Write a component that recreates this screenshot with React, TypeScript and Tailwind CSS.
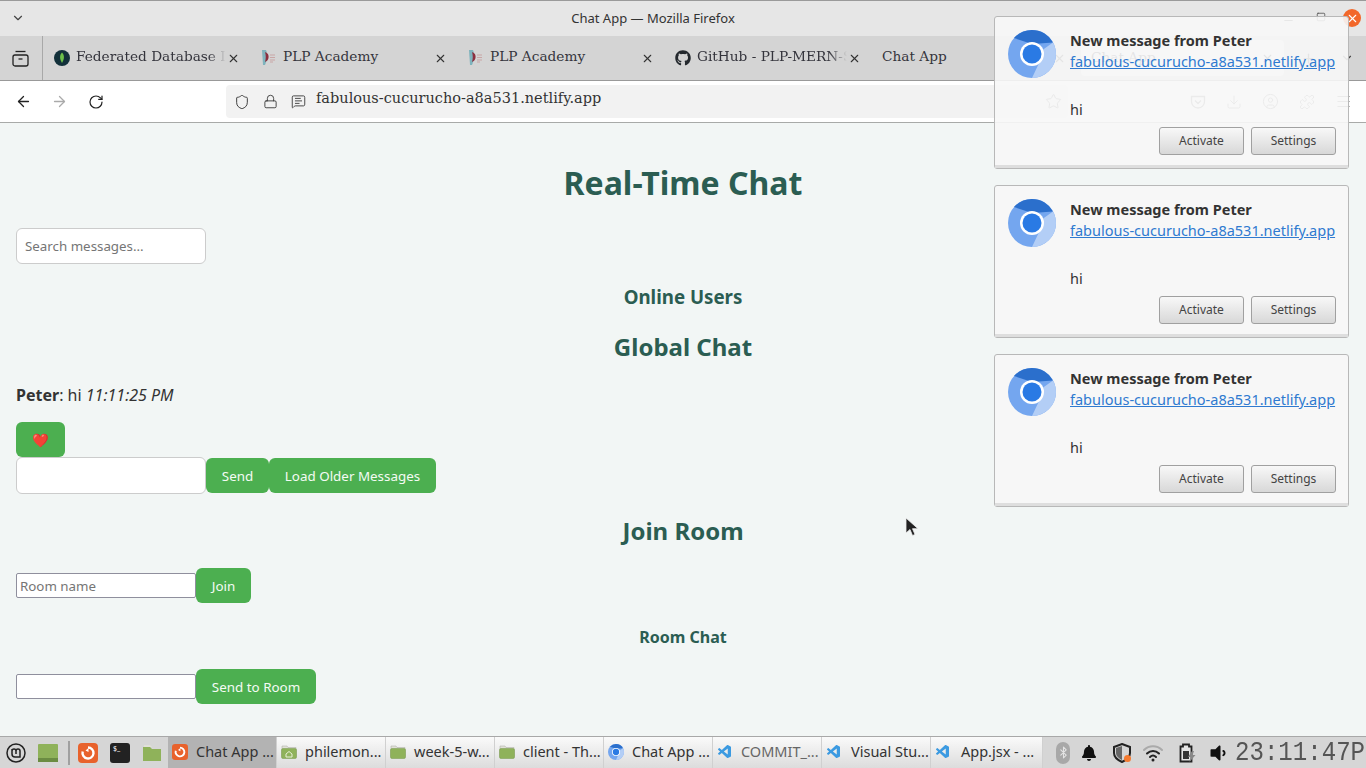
import { ArrowLeft, ArrowRight, Bluetooth, ChevronDown, CircleUser, Download, Lock, Menu, MessageSquareText, Minus, Plus, Puzzle, RotateCw, Shield, Square, Star, X } from 'lucide-react';
import { FaBell, FaGithub, FaVolumeDown } from 'react-icons/fa';
import { VscVscode } from 'react-icons/vsc';

const serif = { fontFamily: '"DejaVu Serif", serif' };

function MongoIcon() {
  return (
    <svg width="16" height="16" viewBox="0 0 16 16">
      <circle cx="8" cy="8" r="8" fill="#12303a" />
      <path d="M8 2.500c2.400 2.400 2.800 6 0 10.500-2.800-4.500-2.400-8.100 0-10.500z" fill="#6cc04a" />
    </svg>
  );
}

function PlpIcon() {
  return (
    <svg width="16" height="18" viewBox="0 0 16 18">
      <path d="M1 1h4c1.500 3 1.500 9-1 15H2z" fill="#7fb3bd" />
      <path d="M4 3c3 1 4 3 3.500 6-.4 2-1.500 3-3.500 4 1-3 1-7 0-10z" fill="#8c2f3f" />
      <path d="M9 6h5M9 8.500h5M9 11h5M9 13h3" stroke="#c9a6a6" strokeWidth="1" />
    </svg>
  );
}

function ChromiumIcon({ size }: { size: number }) {
  return (
    <svg width={size} height={size} viewBox="0 0 48 48">
      <circle cx="24" cy="24" r="24" fill="#74a6ef" />
      <path d="M24 0a24 24 0 0 1 21 12.400L24 14 6 8A24 24 0 0 1 24 0z" fill="#2b6fcc" />
      <path d="M45 12.400A24 24 0 0 1 24 48l8-17 1-10z" fill="#b3cef6" />
      <circle cx="24" cy="24" r="12" fill="#fff" />
      <circle cx="24" cy="24" r="9.500" fill="#2a7ae4" />
    </svg>
  );
}

function FirefoxIcon({ size }: { size: number }) {
  return (
    <svg width={size} height={size} viewBox="0 0 20 20">
      <rect width="20" height="20" rx="4" fill="#e8622c" />
      <path d="M10 4.500a5.500 5.500 0 1 1-5.300 4" fill="none" stroke="#fff" strokeWidth="2.400" />
      <path d="M7.500 7.500l3-2.500v4z" fill="#fff" />
    </svg>
  );
}

function FolderIcon({ home }: { home?: boolean }) {
  return (
    <svg width="16" height="14" viewBox="0 0 16 14">
      <path d="M1 1h5l1 1.500h8v9H1z" fill="#e0e0d8" stroke="#a8a8a0" strokeWidth=".5" />
      <rect x=".5" y="3.500" width="15" height="10" rx="1.500" fill="#8fb25a" stroke="#76984a" strokeWidth=".5" />
      {home && <path d="M5 9l3-2.500L11 9v3H5z" fill="none" stroke="#e8f0d8" strokeWidth="1" />}
    </svg>
  );
}

function Tab({ icon, title, fade }: { icon?: React.ReactNode; title: string; fade?: boolean }) {
  return (
    <div className="flex h-full w-[207px] shrink-0 items-center pl-[11px]" style={serif}>
      {icon && <span className="mr-[6px] flex w-[16px] justify-center">{icon}</span>}
      <span className={`mb-[4px] h-[20px] overflow-hidden whitespace-nowrap text-[13.700px] leading-[20px] text-[#34343c] ${icon ? 'w-[150px]' : 'w-[170px]'} ${fade ? '[mask-image:linear-gradient(to_right,black_88%,transparent)]' : ''}`}>
        {title}
      </span>
      <X size={13} strokeWidth={2} className="ml-[1px] text-[#333]" />
    </div>
  );
}

function NotifButton({ label }: { label: string }) {
  return (
    <button className="h-[28px] w-[85px] rounded-[3px] border border-[#a0a0a0] bg-gradient-to-b from-[#f8f8f8] to-[#d8d8d8] text-[12px] text-[#444]">
      {label}
    </button>
  );
}

function Notification() {
  return (
    <div className="h-[153px] w-[355px] rounded-[3px] border border-[#b8b8b8] bg-[#f7f7f7]/90 font-['Noto_Sans']">
      <div className="flex h-full flex-col border-b-[3px] border-[#dedede]">
        <div className="flex pl-[13px] pt-[13px]">
          <ChromiumIcon size={48} />
          <div className="ml-[14px] text-[#333]">
            <div className="text-[14.500px] font-bold leading-[20px]">New message from Peter</div>
            <div className="mt-[1px] text-[14.500px] leading-[20px] text-[#2f7ad0] underline">fabulous-cucurucho-a8a531.netlify.app</div>
            <div className="mt-[28px] text-[14.500px] leading-[20px]">hi</div>
          </div>
        </div>
        <div className="mt-[8px] flex justify-end gap-[7px] pr-[12px]">
          <NotifButton label="Activate" />
          <NotifButton label="Settings" />
        </div>
      </div>
    </div>
  );
}

function TaskButton({ icon, label, active, muted, width = 109, gap = 'gap-[8px]' }: { icon: React.ReactNode; label: string; active?: boolean; muted?: boolean; width?: number; gap?: string }) {
  return (
    <div
      style={{ width }}
      className={`flex h-full shrink-0 items-center border-r border-[#d0d0d0] pb-[2px] pl-[3px] text-[14.500px] ${gap} ${
        active ? 'bg-[#b3b3b3]' : 'bg-gradient-to-b from-[#fafafa] to-[#dcdcdc]'
      } ${muted ? 'text-[#666]' : 'text-[#333]'}`}
    >
      <span className="flex w-[17px] shrink-0 justify-center">{icon}</span>
      <span className="whitespace-nowrap">{label}</span>
    </div>
  );
}

function GreenButton({ className, children }: { className: string; children: React.ReactNode }) {
  return <button className={`rounded-[6px] bg-[#4caf50] pt-[1px] text-center text-[13.400px] text-[#f4fbf4] ${className}`}>{children}</button>;
}

export default function App() {
  const vscode = <VscVscode size={16} className="text-[#3b9ae1]" />;
  return (
    <div className="relative flex h-[768px] w-[1366px] flex-col overflow-hidden bg-[#f2f6f5] font-['Noto_Sans']">
      {/* title bar */}
      <div className="relative flex h-[36px] shrink-0 items-center justify-center border-t border-[#9a9a9a] bg-[#e6e6e6] pr-[60px] text-[13px] text-[#333]">
        <ChevronDown size={14} className="absolute left-[11px] top-[10px] text-[#444]" />
        Chat App — Mozilla Firefox
        <Minus size={13} className="absolute left-[1282px] top-[13px] text-[#555]" />
        <Square size={10} className="absolute left-[1316px] top-[11px] text-[#555]" />
        <div className="absolute right-[5px] top-[8px] flex h-[18px] w-[18px] items-center justify-center rounded-full bg-[#f2672a]">
          <X size={13} className="text-white" />
        </div>
      </div>

      {/* tab strip */}
      <div className="flex h-[45px] shrink-0 items-center border-b border-[#999] bg-[#d4d4d4]">
        <div className="flex h-full w-[43px] items-center justify-center border-r border-[#a8a8a8] pr-[2px]">
          <svg width="17" height="17" viewBox="0 0 17 17" fill="none" stroke="#222" strokeWidth="1.300">
            <path d="M3.500 1.500h10" />
            <rect x="1" y="5" width="15" height="11" rx="2" />
            <path d="M6.500 9h4" />
          </svg>
        </div>
        <Tab icon={<MongoIcon />} title="Federated Database Instances" fade />
        <Tab icon={<PlpIcon />} title="PLP Academy" />
        <Tab icon={<PlpIcon />} title="PLP Academy" />
        <Tab icon={<FaGithub size={16} className="text-[#24292e]" />} title="GitHub - PLP-MERN-Stack" fade />
        <Tab title="Chat App" />
        <div className="ml-[3px] flex h-[36px] w-[203px] items-center rounded-[4px] bg-[#f2f2f2] pl-[10px] text-[13.700px] text-[#34343c]" style={serif}>
          <span className="mb-[2px]">Chat App</span>
          <X size={13} className="ml-auto mr-[10px] text-[#333]" />
        </div>
        <Plus size={15} className="ml-[17px] text-[#444]" />
        <ChevronDown size={14} className="ml-[24px] text-[#444]" />
      </div>

      {/* nav bar */}
      <div className="flex h-[42px] shrink-0 items-center border-b border-[#a8aaa8] bg-white">
        <ArrowLeft size={17} strokeWidth={1.800} className="ml-[15px] text-[#222]" />
        <ArrowRight size={17} strokeWidth={1.800} className="ml-[19px] text-[#aaa]" />
        <RotateCw size={16} strokeWidth={1.800} className="ml-[20px] text-[#222]" />
        <div className="ml-[122px] flex h-[33px] w-[842px] items-center rounded-[4px] bg-[#f2f2f2] pl-[8px] text-[#333]">
          <Shield size={16} strokeWidth={1.400} />
          <Lock size={15} strokeWidth={1.400} className="ml-[13px]" />
          <MessageSquareText size={15} strokeWidth={1.400} className="ml-[13px]" />
          <span className="mb-[5px] ml-[10px] text-[14.500px]" style={serif}>fabulous-cucurucho-a8a531.netlify.app</span>
          <Star size={17} strokeWidth={1.400} className="ml-auto mr-[6px] text-[#666]" />
        </div>
        <div className="ml-[122px] flex items-center gap-[20px] text-[#777]">
          <svg width="16" height="16" viewBox="0 0 16 16" fill="none" stroke="currentColor" strokeWidth="1.300">
            <path d="M1.500 2.500h13v5a6.500 6.500 0 0 1-13 0z" />
            <path d="M5 6.500l3 3 3-3" />
          </svg>
          <Download size={16} strokeWidth={1.400} />
          <CircleUser size={17} strokeWidth={1.400} />
          <Puzzle size={16} strokeWidth={1.400} />
          <Menu size={17} strokeWidth={1.400} />
        </div>
      </div>

      {/* page */}
      <main className="min-h-0 flex-1 px-[16px] text-[16px] text-[#333]">
        <h1 className="mt-[38px] text-center text-[32px] font-bold leading-[44px] text-[#2b5d52]">Real-Time Chat</h1>
        <input
          placeholder="Search messages..."
          className="mt-[23px] block h-[36px] w-[190px] rounded-[6px] border border-[#ccc] bg-white px-[8px] text-[13.333px] placeholder:text-[#757575]"
        />
        <h3 className="mt-[22px] text-center text-[18.720px] font-bold leading-[22px] text-[#2b5d52]">Online Users</h3>
        <h2 className="mt-[23px] text-center text-[24px] font-bold leading-[32px] text-[#2b5d52]">Global Chat</h2>
        <p className="mt-[21px] leading-[22px]">
          <strong>Peter</strong>: hi <em>11:11:25 PM</em>
        </p>
        <GreenButton className="mt-[16px] block h-[35px] w-[49px]">❤️</GreenButton>
        <div className="flex items-center">
          <input className="h-[37px] w-[190px] rounded-[6px] border border-[#ccc] bg-white" />
          <GreenButton className="h-[35px] w-[63px]">Send</GreenButton>
          <GreenButton className="h-[35px] w-[167px]">Load Older Messages</GreenButton>
        </div>
        <h2 className="mt-[21px] text-center text-[24px] font-bold leading-[32px] text-[#2b5d52]">Join Room</h2>
        <div className="mt-[21px] flex items-center">
          <input placeholder="Room name" className="h-[25px] w-[180px] rounded-[2px] border border-[#8f8f9d] bg-white px-[3px] text-[13.333px] placeholder:text-[#757575]" />
          <GreenButton className="h-[35px] w-[55px]">Join</GreenButton>
        </div>
        <h4 className="mt-[23px] text-center text-[16px] font-bold leading-[22px] text-[#2b5d52]">Room Chat</h4>
        <div className="mt-[21px] flex items-center">
          <input className="h-[25px] w-[180px] rounded-[2px] border border-[#8f8f9d] bg-white" />
          <GreenButton className="h-[35px] w-[120px]">Send to Room</GreenButton>
        </div>
      </main>

      {/* taskbar */}
      <div className="flex h-[32px] shrink-0 items-center overflow-hidden border-t border-[#a8a8a8] bg-[#d6d6d6]">
        <div className="flex h-full w-[168px] shrink-0 items-center">
          <svg width="20" height="20" viewBox="0 0 20 20" className="ml-[6px]" fill="none" stroke="#222" strokeWidth="1.500">
            <circle cx="10" cy="10" r="9" />
            <path d="M6 6v5a3 3 0 0 0 3 3h5V8a2 2 0 0 0-4 0v3M10 8a2 2 0 0 0-4 0" />
          </svg>
          <div className="ml-[12px] flex h-[18px] w-[20px] flex-col justify-end rounded-[1px] bg-[#8fb25a]">
            <div className="h-[4px] bg-[#6b8c42]" />
          </div>
          <div className="ml-[10px] h-[24px] w-[2px] bg-[#a0a0a0]" />
          <span className="ml-[8px]"><FirefoxIcon size={20} /></span>
          <div className="ml-[12px] flex h-[20px] w-[20px] items-start rounded-[3px] bg-[#222] pl-[3px] pt-[1px] text-[7px] leading-[10px] text-white">$_</div>
          <span className="ml-[12px] flex"><svg width="20" height="18" viewBox="0 0 20 18"><path d="M1 3h7l2 2h9v12H1z" fill="#8fb25a" /><path d="M2 1h6l2 2H2z" fill="#e0e0d8" /></svg></span>
        </div>
        <TaskButton active icon={<FirefoxIcon size={16} />} label="Chat App ..." />
        <TaskButton icon={<FolderIcon home />} label="philemon..." />
        <TaskButton icon={<FolderIcon />} label="week-5-w..." />
        <TaskButton icon={<FolderIcon />} label="client - Th..." />
        <TaskButton icon={<ChromiumIcon size={16} />} label="Chat App ..." />
        <TaskButton muted icon={vscode} label="COMMIT_..." />
        <TaskButton icon={vscode} label="Visual Stu..." gap="gap-[9px]" />
        <TaskButton icon={vscode} label="App.jsx - ..." width={112} gap="gap-[10px]" />
        <div className="ml-[13px] flex shrink-0 items-center">
          <div className="flex h-[22px] w-[14px] items-center justify-center rounded-full bg-[#a8a8a8]"><Bluetooth size={13} className="text-[#e4e4e4]" /></div>
          <FaBell size={16} className="ml-[11px] text-[#111]" />
          <svg width="20" height="20" viewBox="0 0 20 20" className="ml-[15px]">
            <path d="M10 1l8 3v6c0 4-3.500 7-8 9-4.500-2-8-5-8-9V4z" fill="none" stroke="#222" strokeWidth="2" />
            <path d="M10 3v14c-3-1.500-6-4-6-7V5z" fill="#666" />
            <circle cx="15.500" cy="15.500" r="3.500" fill="#f47a30" />
          </svg>
          <svg width="20" height="18" viewBox="0 0 20 18" className="ml-[11px]" fill="none" strokeLinecap="round">
            <path d="M1 6c5-5 13-5 18 0" stroke="#aaa" strokeWidth="2" />
            <path d="M4 9.500c3.500-3.500 8.500-3.500 12 0" stroke="#222" strokeWidth="2" />
            <path d="M7 13c2-2 4-2 6 0" stroke="#222" strokeWidth="2" />
            <circle cx="10" cy="16" r="1.500" fill="#222" />
          </svg>
          <svg width="19" height="20" viewBox="0 0 19 20" className="ml-[15px]">
            <path d="M5 1.500h6v2h2.500v15H2.500v-15H5z" fill="#e4e4e4" stroke="#222" strokeWidth="1.800" />
            <path d="M5 8h6v8H5z" fill="#333" />
            <path d="M14 8l-4 6h3l-1.500 5 6-7h-3l1.500-4z" fill="#888" />
          </svg>
          <FaVolumeDown size={20} className="ml-[11px] text-[#111]" />
          <span className="ml-[7px] inline-block w-[131px] origin-left scale-x-[0.86] whitespace-nowrap font-['Liberation_Mono'] text-[28px] leading-[30px] text-[#555]">23:11:47P</span>
        </div>
      </div>

      {/* desktop notifications */}
      <div className="absolute left-[994px] top-[16px] flex flex-col gap-[16px]">
        <Notification />
        <Notification />
        <Notification />
      </div>

      {/* mouse pointer */}
      <svg width="14" height="20" viewBox="0 0 14 20" className="absolute left-[905px] top-[517px]">
        <path d="M1 1v15l4-3.500 2.500 6 2.500-1-2.500-5.800H13z" fill="#222" stroke="#eee" strokeWidth=".8" />
      </svg>
    </div>
  );
}
